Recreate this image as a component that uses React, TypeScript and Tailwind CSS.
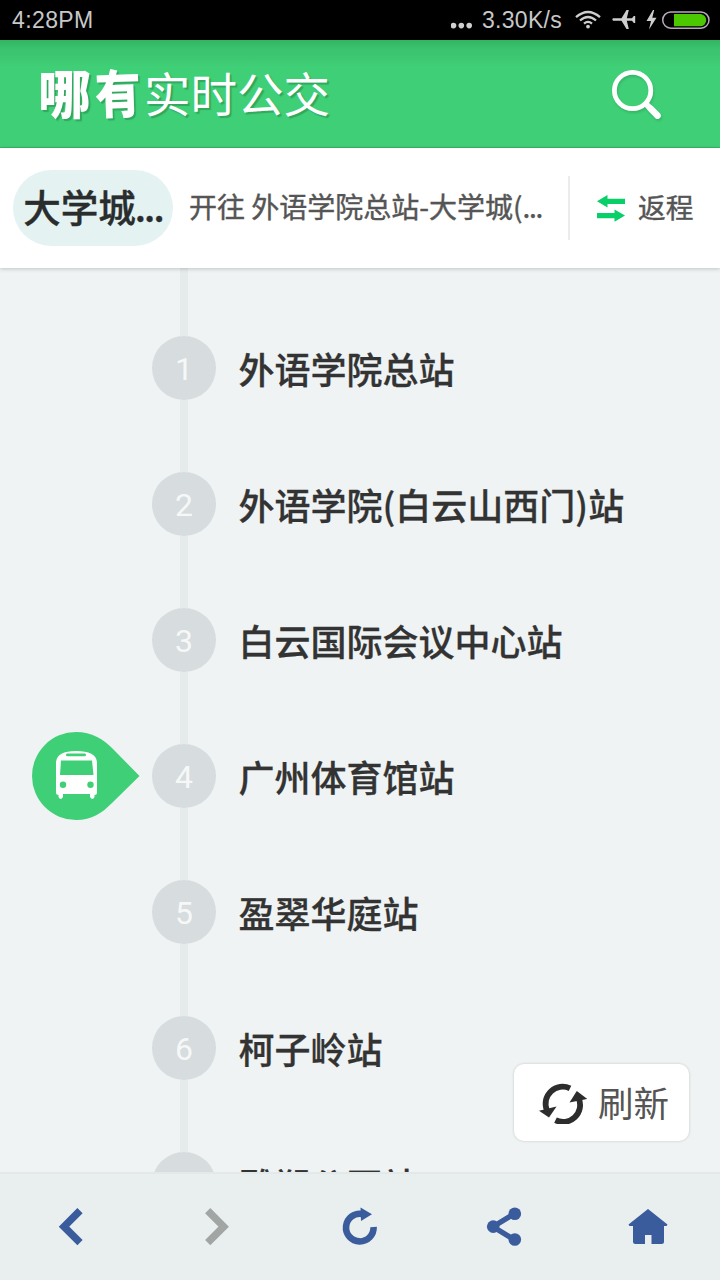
import React from 'react';

const stations = [
  '外语学院总站',
  '外语学院(白云山西门)站',
  '白云国际会议中心站',
  '广州体育馆站',
  '盈翠华庭站',
  '柯子岭站',
  '雕塑公园站',
];

const busAt = 3;

function StatusBar() {
  return (
    <div className="flex h-10 shrink-0 items-center justify-between bg-black pl-3 pr-[10px] font-['Liberation_Sans','Noto_Sans_CJK_SC',sans-serif] text-[#c8c8c8]">
      <span className="text-[23px] leading-10 tracking-[0.4px]">4:28PM</span>
      <div className="flex h-10 items-center">
        <svg width="23" height="40" viewBox="0 0 23 40" fill="#cecece">
          <circle cx="2.5" cy="25.6" r="2.8" />
          <circle cx="10.3" cy="25.6" r="2.8" />
          <circle cx="18.2" cy="25.6" r="2.8" />
        </svg>
        <span className="ml-[8px] w-[82px] whitespace-nowrap text-[23px] leading-10 tracking-[0.3px]">3.30K/s</span>
        <svg className="ml-[11px]" width="26" height="40" viewBox="0 0 26 40" fill="none" stroke="#cecece" strokeWidth="2.3">
          <path d="M1 17.2Q13 6.8 25 17.2" />
          <path d="M5 20.5Q13 13.5 21 20.5" />
          <path d="M9 23.6Q13 20.2 17 23.6" />
          <circle cx="13" cy="26.6" r="1.9" fill="#cecece" stroke="none" />
        </svg>
        <svg className="ml-[11px]" width="24" height="40" viewBox="0 0 24 40" fill="#cecece">
          <path d="M1 18.3L9.5 18.2L14.5 10H16.8L14.8 18.2H20L21.8 16H23.2V23H21.8L20 20.8H14.8L16.8 29H14.5L9.5 20.8L1 20.7Q-.2 19.5 1 18.3Z" />
        </svg>
        <svg className="ml-[9px]" width="16" height="40" viewBox="0 0 16 40" fill="#cecece">
          <path d="M8 10L1.5 21H6L4 29.5L11.5 17.8H7.3L9.2 10Z" />
        </svg>
        <svg width="49" height="40" viewBox="0 0 49 40">
          <rect x="1.7" y="12" width="46.3" height="16.2" rx="8.1" fill="#000" stroke="#b7a9bd" strokeWidth="1.5" />
          <path d="M13 14H39.8A6.2 6.2 0 0 1 39.8 26.3H13Z" fill="#4cc800" />
        </svg>
      </div>
    </div>
  );
}

function Header() {
  return (
    <header className="flex h-[108px] shrink-0 items-center justify-between border-b border-[#37b568] bg-[linear-gradient(to_bottom,#31b560_0px,#3bc26f_8px,#3dc972_20px,#3fcf77_26px,#3fcf77_100%)] pl-[38px] pr-[56px] text-white">
      <div className="flex items-center pb-[3px] [text-shadow:2px_2px_1px_rgba(30,120,65,0.45)]">
        <span className="flex text-[52px] font-black leading-[80px]">
          <span className="w-[57px] origin-left scale-x-[1.02]">哪</span>
          <span className="w-[49px] origin-left scale-x-[0.88] -rotate-2">有</span>
        </span>
        <span className="text-[46.5px] font-normal leading-[80px]">实时公交</span>
      </div>
      <svg width="54" height="54" viewBox="0 0 54 54" fill="none" stroke="#fff" className="drop-shadow-[1px_2px_1px_rgba(30,130,70,0.3)]">
        <circle cx="22.6" cy="23.5" r="18.2" strokeWidth="4.8" />
        <path d="M36 37L48 49" strokeWidth="6" />
        <path d="M41 42L47.5 48.6" strokeWidth="6.6" strokeLinecap="round" />
      </svg>
    </header>
  );
}

function RouteBar() {
  return (
    <div className="z-10 flex h-[120px] shrink-0 items-center bg-white pl-[13px] shadow-[0_1px_4px_rgba(0,0,0,0.2)]">
      <div className="flex h-[76px] w-[160px] items-center justify-center rounded-full bg-[#e4f3f2] text-[37.5px] font-medium text-[#292d2d] [-webkit-text-stroke:0.4px_#292d2d]">
        <span className="flex whitespace-nowrap pb-[4px] leading-[66px]">
          大学城<span className="-ml-px tracking-[-1.8px]">...</span>
        </span>
      </div>
      <span className="ml-4 w-[379px] whitespace-nowrap pb-[5px] text-[28px] leading-[70px] text-[#555] [-webkit-text-stroke:0.4px_#555]">
        开往 外语学院总站-大学城(<span className="tracking-[-1.3px]">...</span>
      </span>
      <span className="h-16 w-[2px] bg-[#ececec]" />
      <svg className="ml-[27px]" width="29" height="30" viewBox="0 0 29 30" fill="#08cf68">
        <path d="M0 8.2L10.5 2V5.8H28V11H10.5V14.5Z" />
        <path d="M28 22.4L17.5 16.5V20H0V25.2H17.5V28.8Z" />
      </svg>
      <span className="ml-3 whitespace-nowrap pb-[5px] text-[27.7px] leading-[70px] text-[#555] [-webkit-text-stroke:0.4px_#555]">返程</span>
    </div>
  );
}

function BusMarker() {
  return (
    <svg width="108" height="88" viewBox="0 0 108 88">
      <path d="M44 0C60 0 71 7 80 16L107.5 44L80 71C70 81 60 88 44 88A44 44 0 0 1 44 0Z" fill="#3fcf77" />
      <path d="M24 30Q25 19 44 19Q64 19 65 30V61Q65 63 62.5 63V65Q60.5 69 58 65V62H31V65Q28.5 69 26.5 65V63Q24 63 24 61Z" fill="#fff" />
      <rect x="34" y="21.5" width="20" height="2.8" rx="1.4" fill="#3fcf77" />
      <path d="M29 28.5H60L61.5 43H28Z" fill="#3fcf77" />
      <circle cx="31" cy="52.7" r="3.2" fill="#3fcf77" />
      <circle cx="58.5" cy="52.7" r="3.2" fill="#3fcf77" />
    </svg>
  );
}

function StationRow({ name, index }: { name: string; index: number }) {
  return (
    <li className="flex h-[136px] shrink-0 items-center">
      <div className="flex w-[152px] shrink-0 pl-8">{index === busAt && <BusMarker />}</div>
      <div className="flex h-full w-16 shrink-0 flex-col items-center">
        <span className="w-2 flex-1 bg-[#e5eaea]" />
        <span className="flex size-16 shrink-0 items-center justify-center rounded-full bg-[#d7dcde] pt-[2px] font-['Roboto',sans-serif] text-[32px] text-[#f6f8f8]">
          {index + 1}
        </span>
        <span className="w-2 flex-1 bg-[#e5eaea]" />
      </div>
      <span className="ml-[22.5px] whitespace-nowrap pb-px text-[36px] font-medium leading-[52px] text-[#333] [-webkit-text-stroke:0.3px_#333]">{name}</span>
    </li>
  );
}

function BottomNav() {
  return (
    <nav className="grid h-[108px] shrink-0 grid-cols-5 items-center border-t-2 border-[#e3e8e8] bg-[#e9efef] text-[#3a5b9c]">
      <svg className="mx-auto" width="48" height="48" viewBox="0 0 48 48" fill="none" stroke="#3a5b9c" strokeWidth="7.4">
        <path d="M32 7.7L16 23.7L32 39.7" />
      </svg>
      <svg className="mx-auto" width="48" height="48" viewBox="0 0 48 48" fill="none" stroke="#a1a6a5" strokeWidth="7.4">
        <path d="M15.7 7.7L31.7 23.7L15.7 39.7" />
      </svg>
      <svg className="mx-auto" width="48" height="48" viewBox="0 0 48 48" fill="none" stroke="#3a5b9c" strokeWidth="6.6">
        <path d="M26 11A13.8 13.8 0 1 0 37.6 24" />
        <path d="M24.5 4.5L36 11.2L25 18Z" fill="#3a5b9c" stroke="none" />
      </svg>
      <svg className="mx-auto" width="48" height="48" viewBox="0 0 48 48" fill="#3a5b9c">
        <path d="M34 11L13 23.7L34 36.5" fill="none" stroke="#3a5b9c" strokeWidth="5.4" />
        <circle cx="34.8" cy="10.7" r="6.3" />
        <circle cx="13.2" cy="23.6" r="6.3" />
        <circle cx="34.8" cy="36.5" r="6.3" />
      </svg>
      <svg className="mx-auto" width="48" height="48" viewBox="0 0 48 48" fill="#3a5b9c">
        <path d="M24 6L43.5 21.5L42.5 23H40V38.5Q40 41 37.5 41H27.5V32H21V41H11.5Q9 41 9 38.5V23H5.5L4.5 21.5Z" />
      </svg>
    </nav>
  );
}

function RefreshButton() {
  return (
    <button className="absolute bottom-[31px] right-[31px] flex h-[77px] w-[175px] items-center rounded-[10px] bg-white pl-[25px] text-[35.5px] text-[#555] shadow-[0_0_3px_rgba(0,0,0,0.18)]">
      <svg width="48" height="42" viewBox="0 0 48 42" fill="none" stroke="#2d2d2d" strokeWidth="5.8">
        <path d="M31 6.4A17 17 0 0 0 7.8 28" />
        <path d="M16.5 38.2A17 17 0 0 0 39.8 16.5" />
        <path d="M0 28.8L17.5 24.5L10 35.5Z" fill="#2d2d2d" stroke="none" />
        <path d="M30.5 20.5L37.8 9L48.5 17Z" fill="#2d2d2d" stroke="none" />
      </svg>
      <span className="ml-[11px] whitespace-nowrap pb-[2px] leading-[52px]">刷新</span>
    </button>
  );
}

export default function App() {
  return (
    <div className="flex h-[1280px] w-[720px] flex-col overflow-hidden bg-[#eff3f3] font-['Noto_Sans_CJK_SC',sans-serif]">
      <StatusBar />
      <Header />
      <RouteBar />
      <main className="relative min-h-0 flex-1 overflow-hidden">
        <ul className="flex flex-col">
          <li className="flex h-8 pl-[180px]">
            <span className="w-2 bg-[#e5eaea]" />
          </li>
          {stations.map((name, i) => (
            <StationRow key={name} name={name} index={i} />
          ))}
        </ul>
        <RefreshButton />
      </main>
      <BottomNav />
    </div>
  );
}
